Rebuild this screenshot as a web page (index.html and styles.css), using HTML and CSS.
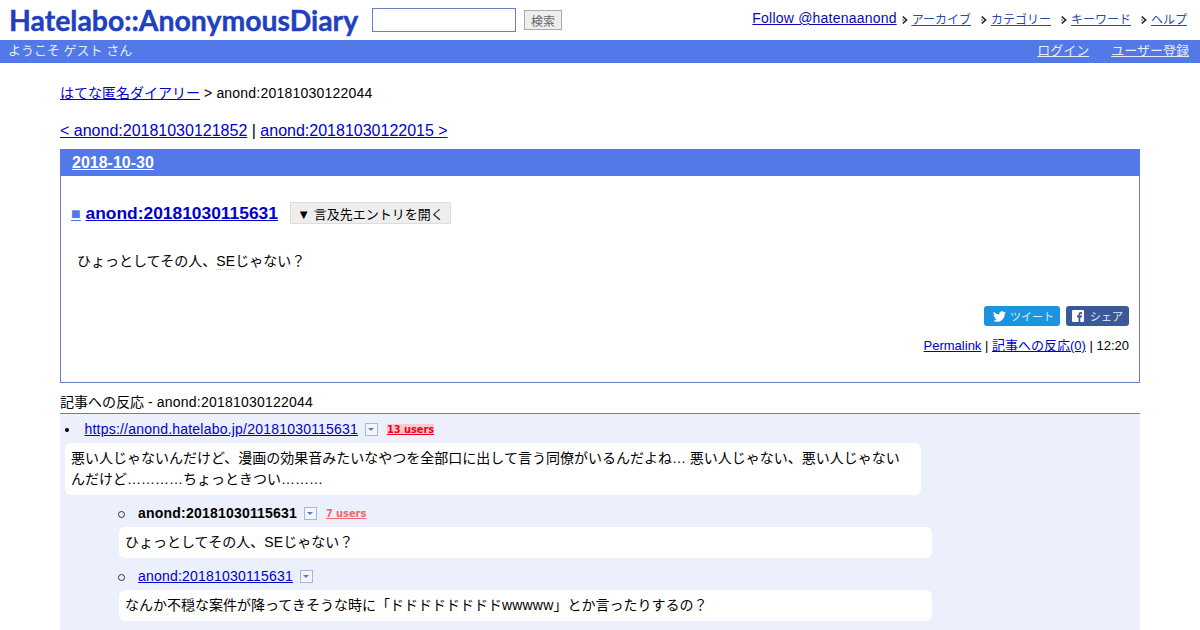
FILE: index.html
```html
<!DOCTYPE html>
<html lang="ja">
<head>
<meta charset="utf-8">
<title>anond:20181030122044</title>
<link rel="stylesheet" href="styles.css">
</head>
<body>
<header class="top">
  <a class="logo">Hatelabo::AnonymousDiary</a>
  <form class="search">
    <input class="search-input" type="text">
    <button class="search-btn" type="button">検索</button>
  </form>
  <nav class="menu">
    <a class="follow lt" href="#">Follow @hatenaanond</a>
    <a class="menu-item" href="#"><svg class="arrow" viewBox="0 0 6 10"><path d="M.8 1.5L4.5 5 .8 8.5M.5 5h1" stroke="#223" stroke-width="1.7" fill="none"/></svg><span>アーカイブ</span></a>
    <a class="menu-item" href="#"><svg class="arrow" viewBox="0 0 6 10"><path d="M.8 1.5L4.5 5 .8 8.5M.5 5h1" stroke="#223" stroke-width="1.7" fill="none"/></svg><span>カテゴリー</span></a>
    <a class="menu-item" href="#"><svg class="arrow" viewBox="0 0 6 10"><path d="M.8 1.5L4.5 5 .8 8.5M.5 5h1" stroke="#223" stroke-width="1.7" fill="none"/></svg><span>キーワード</span></a>
    <a class="menu-item" href="#"><svg class="arrow" viewBox="0 0 6 10"><path d="M.8 1.5L4.5 5 .8 8.5M.5 5h1" stroke="#223" stroke-width="1.7" fill="none"/></svg><span>ヘルプ</span></a>
  </nav>
</header>
<div class="welcome">
  <span>ようこそ ゲスト さん</span>
  <span class="auth"><a href="#">ログイン</a><a href="#">ユーザー登録</a></span>
</div>
<main class="content">
  <p class="crumb"><a href="#">はてな匿名ダイアリー</a> <span class="lt">&gt; anond:20181030122044</span></p>
  <p class="pager"><a href="#">&lt; anond:20181030121852</a> | <a href="#">anond:20181030122015 &gt;</a></p>
  <section class="day">
    <h2 class="day-head"><a href="#">2018-10-30</a></h2>
    <div class="day-body">
      <div class="title-row">
        <h3 class="entry-title"><a class="sq" href="#">■</a> <a href="#">anond:20181030115631</a></h3>
        <button class="refs" type="button">▼ 言及先エントリを開く</button>
      </div>
      <p class="entry-text">ひょっとしてその人、<span class="kw lt">SE</span>じゃない？</p>
      <div class="share">
        <a class="btn tw"><svg viewBox="0 0 24 24" class="btn-ic"><path fill="#fff" d="M23.95 4.57a10 10 0 0 1-2.82.77 4.96 4.96 0 0 0 2.16-2.72c-.95.55-2 .95-3.12 1.18a4.92 4.92 0 0 0-8.38 4.48C7.69 8.1 4.07 6.13 1.64 3.16a4.9 4.9 0 0 0 1.52 6.57 4.9 4.9 0 0 1-2.23-.61v.06a4.92 4.92 0 0 0 3.95 4.83 5 5 0 0 1-2.22.08 4.94 4.94 0 0 0 4.6 3.42A9.87 9.87 0 0 1 0 19.54a13.94 13.94 0 0 0 7.55 2.21c9.05 0 14-7.5 14-13.98 0-.21 0-.42-.02-.63a9.94 9.94 0 0 0 2.46-2.55z"/></svg>ツイート</a>
        <a class="btn fb"><svg viewBox="0 0 12 12" class="btn-ic fb-ic"><rect width="12" height="12" rx="1.2" fill="#fff"/><path fill="#3b5998" d="M8.3 12V7.4h1.5l.25-1.8H8.3V4.5c0-.5.15-.85.9-.85h.9V2c-.2 0-.7-.07-1.3-.07-1.35 0-2.25.8-2.25 2.3v1.37H5v1.8h1.55V12z"/></svg>シェア</a>
      </div>
      <p class="entry-foot"><a href="#">Permalink</a> | <a href="#">記事への反応(0)</a> | 12:20</p>
    </div>
  </section>
  <h4 class="refs-head">記事への反応 <span class="lt">- anond:20181030122044</span></h4>
  <div class="refs-list">
    <ul class="l1">
      <li>
        <a class="lt" href="#">https://anond.hatelabo.jp/20181030115631</a>
        <span class="drop"></span>
        <span class="users u13">13 users</span>
        <p class="bubble b1">悪い人じゃないんだけど、漫画の効果音みたいなやつを全部口に出して言う同僚がいるんだよね… 悪い人じゃない、悪い人じゃないんだけど…………ちょっときつい………</p>
        <ul class="l2">
          <li>
            <strong class="lt">anond:20181030115631</strong>
            <span class="drop"></span>
            <span class="users u7">7 users</span>
            <p class="bubble b2">ひょっとしてその人、<span class="lt">SE</span>じゃない？</p>
          </li>
          <li>
            <a class="lt" href="#">anond:20181030115631</a>
            <span class="drop"></span>
            <p class="bubble b2">なんか不穏な案件が降ってきそうな時に「ドドドドドドドド<span class="lt">wwwww</span>」とか言ったりするの？</p>
          </li>
        </ul>
      </li>
    </ul>
  </div>
</main>
</body>
</html>
```
FILE: styles.css
```css
* { box-sizing: border-box; }
html, body { margin: 0; padding: 0; height: 630px; overflow: hidden; }
body {
  background: #fff;
  color: #000;
  font-family: "Liberation Sans", "Noto Sans CJK JP", sans-serif;
  font-size: 14px;
}
a { color: #0000cc; }
p, h2, h3, h4, ul { margin: 0; padding: 0; }
.lt { letter-spacing: .21px; }

.top { display: flex; align-items: flex-start; height: 40px; }
.logo {
  margin: 3px 0 0 9px;
  width: 350px;
  font-family: "Lato", sans-serif;
  font-weight: 700;
  font-size: 28.4px;
  line-height: 35px;
  color: #2040c0;
  -webkit-text-stroke: .4px #2040c0;
  white-space: nowrap;
}
.search { display: flex; margin: 8px 0 0 13px; }
.search-input {
  width: 144px; height: 24px; padding: 0; margin: 0;
  border: 1px solid #6a7fc8; background: #fff;
}
.search-btn {
  width: 38px; height: 20px; margin: 2px 0 0 8px; padding: 0;
  font: 12px "Liberation Sans", "Noto Sans CJK JP", sans-serif;
  color: #666; background: #eee; border: 1px solid #aaa;
}
.menu { margin-left: auto; display: flex; padding: 10px 13px 0 0; }
.follow { font-size: 14px; line-height: 16px; color: #0a0ab0; }
.menu-item { display: flex; align-items: flex-start; margin-left: 10px; font-size: 12px; line-height: 20px; }
.follow + .menu-item { margin-left: 5px; }
.menu-item span { color: #2a4aa8; text-decoration: underline; }
.arrow { width: 6px; height: 10px; margin: 5px 4px 0 0; }

.welcome {
  height: 23px; background: #5279e7; color: #e8ecf8;
  display: flex; justify-content: space-between;
  padding: 0 11px 0 8px; font-size: 13px; line-height: 22px;
}
.auth a { color: #e8ecf8; margin-left: 22px; }

.content { padding: 0 60px; }
.crumb { margin-top: 21px; line-height: 18px; font-size: 14px; }
.pager { margin-top: 19px; font-size: 16px; line-height: 20px; }

.day { margin-top: 8px; height: 234px; border: 1px solid #647dcc; border-top: 0; }
.day-head { height: 27px; margin: 0 -1px; background: #5279e7; padding: 4px 12px 0; font-size: 16px; line-height: 20px; }
.day-head a { color: #fff; }
.day-body { padding: 0 10px; }
.title-row { display: flex; align-items: center; margin-top: 26px; height: 22px; }
.entry-title { font-size: 17.4px; line-height: 22px; white-space: nowrap; }
.sq { color: #5279e7; font-size: 16px; }
.refs {
  margin-left: 12px; height: 22px; width: 161px; padding: 0;
  font: 13px "Liberation Sans", "Noto Sans CJK JP", sans-serif;
  color: #000; background: #eee; border: 1px solid #ddd;
}
.entry-text { margin: 27px 0 0 6px; line-height: 21px; font-size: 14px; }
.kw { border-bottom: 1px dotted #ccc; }
.share { display: flex; justify-content: flex-end; gap: 6px; margin-top: 34px; }
.btn {
  display: flex; align-items: center; height: 20px; border-radius: 3px;
  color: #dfeaf6; font-size: 11px; padding: 0 6px 0 9px;
}
.btn-ic { width: 13px; height: 13px; margin-right: 4px; }
.fb-ic { width: 12px; height: 12px; margin: 0 6px 0 -3px; }
.tw { background: #1b95e0; }
.fb { background: #3b5998; }
.entry-foot { text-align: right; margin-top: 10px; font-size: 13px; line-height: 20px; }

.refs-head {
  margin-top: 9px; height: 22px; font-weight: 400; font-size: 14px; line-height: 21px;
  border-bottom: 1px solid #647dcc;
}
.refs-list { background: #ebf0fc; height: 216px; padding: 5px 5px 0; }
.l1 { list-style: disc inside; }
.l1 > li { line-height: 20px; font-size: 14px; }
.l1 > li > a { margin-left: .5px; }
.bubble { background: #fff; border-radius: 6px; padding: 5px 6px; line-height: 21px; }
.b1 { width: 856px; margin-top: 3px; height: 52px; padding-right: 12px; }
.l2 { list-style: none; margin-left: 54px; padding-left: 19px; }
.l2 > li { padding-top: 8px; position: relative; }
.l2 > li::before {
  content: ""; position: absolute; left: -20px; top: 16px;
  width: 5px; height: 5px; border: 1px solid #333; border-radius: 50%;
}
.b2 { width: 813px; height: 31px; margin: 3px 0 0 -19px; }
.l2 > li + li .b2 { margin-top: 4px; }
.drop {
  display: inline-block; width: 13px; height: 13px; margin-left: 3px;
  vertical-align: -2px; background: #f4f6fc; border: 1px solid #aab6d8;
  position: relative;
}
.drop::after {
  content: ""; position: absolute; left: 2px; top: 4px;
  border: 3.5px solid transparent; border-top-color: #5f76c4; border-bottom: 0;
}
.users {
  font-family: "DejaVu Sans", sans-serif; font-weight: 700; font-size: 9.8px;
  margin-left: 5px; text-decoration: underline; vertical-align: 1px;
}
.u13 { color: #f0001c; background: #ffc8ce; }
.u7 { color: #f0666c; }
```
